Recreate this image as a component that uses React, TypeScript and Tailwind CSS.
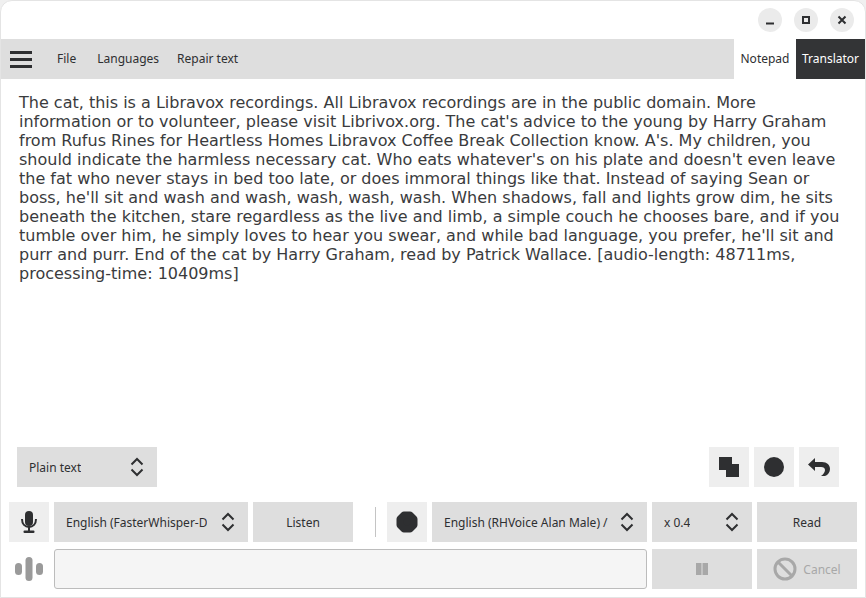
const Chevrons = () => (
  <svg width="14" height="22" viewBox="0 0 14 22" fill="none" stroke="#2e2f31" strokeWidth="2" className="shrink-0">
    <path d="M1.500 8.500 7 3l5.500 5.500M1.500 13.500 7 19l5.500-5.500" />
  </svg>
);

const Select = ({ label, className }: { label: string; className: string }) => (
  <div className={`h-10 shrink-0 bg-[#dedede] flex items-center justify-between pl-3 pr-[13px] text-[12px] text-[#2e2f31] ${className}`}>
    <span className="truncate pt-px">{label}</span>
    <Chevrons />
  </div>
);

const IconBox = ({ children }: { children: React.ReactNode }) => (
  <div className="w-10 h-10 bg-[#eeeeee] flex items-center justify-center shrink-0">{children}</div>
);

const WinButton = ({ children }: { children: React.ReactNode }) => (
  <div className="w-6 h-6 rounded-full bg-[#ebebeb] flex items-center justify-center">
    <svg width="10" height="10" viewBox="0 0 10 10" fill="none" stroke="#2e2f31" strokeWidth="2">{children}</svg>
  </div>
);

const text = "The cat, this is a Libravox recordings. All Libravox recordings are in the public domain. More information or to volunteer, please visit Librivox.org. The cat's advice to the young by Harry Graham from Rufus Rines for Heartless Homes Libravox Coffee Break Collection know. A's. My children, you should indicate the harmless necessary cat. Who eats whatever's on his plate and doesn't even leave the fat who never stays in bed too late, or does immoral things like that. Instead of saying Sean or boss, he'll sit and wash and wash, wash, wash, wash. When shadows, fall and lights grow dim, he sits beneath the kitchen, stare regardless as the live and limb, a simple couch he chooses bare, and if you tumble over him, he simply loves to hear you swear, and while bad language, you prefer, he'll sit and purr and purr. End of the cat by Harry Graham, read by Patrick Wallace. [audio-length: 48711ms, processing-time: 10409ms]";

export default function App() {
  return (
    <div className="w-[866px] h-[598px] bg-[#f0f0f0] font-['Noto_Sans',sans-serif] text-[#2e2f31]">
      <div className="w-full h-full bg-white flex flex-col overflow-hidden rounded-t-[12px] border border-[#e4e4e4]">
        <div className="h-[38px] flex items-center justify-end gap-3 pr-[11px] shrink-0">
          <WinButton><path d="M1 8.500h8" /></WinButton>
          <WinButton><path d="M2 2h6v6H2z" /></WinButton>
          <WinButton><path d="m1.500 1.500 7 7M8.500 1.500l-7 7" /></WinButton>
        </div>
        <div className="h-10 bg-[#dedede] flex items-center shrink-0 text-[12px]">
          <div className="w-[42px] pl-[9px] flex flex-col gap-1 shrink-0">
            <div className="w-[22px] h-[3px] bg-[#2e2f31]" />
            <div className="w-[22px] h-[3px] bg-[#2e2f31]" />
            <div className="w-[22px] h-[3px] bg-[#2e2f31]" />
          </div>
          <span className="ml-[14px]">File</span>
          <span className="ml-[21px]">Languages</span>
          <span className="ml-[18px]">Repair text</span>
          <div className="ml-auto flex h-full">
            <div className="w-[62px] bg-white flex items-center justify-center">Notepad</div>
            <div className="w-[69px] bg-[#333436] text-white flex items-center justify-center">Translator</div>
          </div>
        </div>
        <div className="flex-1 pl-[18px] pr-[18px] pt-[14px] font-['DejaVu_Sans',sans-serif] text-[16px] leading-[19px] text-[#3a3b3d]">{text}</div>
        <div className="flex items-center justify-between pl-4 pr-[26px] shrink-0">
          <Select label="Plain text" className="w-[140px]" />
          <div className="flex gap-[5px]">
            <IconBox>
              <svg width="20" height="20" viewBox="0 0 20 20" fill="#2e2f31">
                <rect x="0" y="0" width="13" height="13" />
                <rect x="7" y="7" width="13" height="13" />
              </svg>
            </IconBox>
            <IconBox><div className="w-5 h-5 rounded-full bg-[#2e2f31]" /></IconBox>
            <IconBox>
              <svg width="22" height="18" viewBox="0 0 22 18">
                <path d="M0 6.500 7 0v4h7c5 0 8 3 8 7 0 3-2 6-5 7h-4c3-2 4-4.500 4-6 0-2-1.500-3-4-3H7v4z" fill="#2e2f31" />
              </svg>
            </IconBox>
          </div>
        </div>
        <div className="flex items-center pl-2 mt-[15px] gap-[5px] shrink-0">
          <IconBox>
            <svg width="16" height="22" viewBox="0 0 16 22" fill="#2e2f31">
              <rect x="4" y="0" width="8" height="15" rx="4" />
              <path d="M1 8c0 5 3 8 7 8s7-3 7-8" fill="none" stroke="#2e2f31" strokeWidth="2" />
              <rect x="7" y="15" width="2" height="5" />
              <rect x="2.500" y="19.500" width="11" height="2.500" rx="1" />
            </svg>
          </IconBox>
          <Select label="English (FasterWhisper-D" className="w-[194px]" />
          <div className="w-[100px] h-10 shrink-0 bg-[#dedede] flex items-center justify-center text-[12px] pt-px">Listen</div>
          <div className="w-px h-[30px] bg-[#c4c4c4] ml-[17px] mr-[6px] shrink-0" />
          <IconBox>
            <svg width="22" height="22" viewBox="0 0 22 22" fill="#2e2f31">
              <path d="M8 4h6l4 4v6l-4 4H8l-4-4V8z" stroke="#2e2f31" strokeWidth="7" strokeLinejoin="round" />
            </svg>
          </IconBox>
          <Select label="English (RHVoice Alan Male) /" className="w-[215px]" />
          <Select label="x 0.4" className="w-[100px]" />
          <div className="w-[100px] h-10 shrink-0 bg-[#dedede] flex items-center justify-center text-[12px] pt-px">Read</div>
        </div>
        <div className="flex items-center pl-2 mt-[7px] mb-2 gap-[5px] shrink-0">
          <div className="w-10 h-10 flex items-center justify-center shrink-0">
            <svg width="28" height="24" viewBox="0 0 28 24" fill="#9a9a9a">
              <rect x="0" y="6" width="7" height="12" rx="3.500" />
              <rect x="10.500" y="0" width="7" height="24" rx="3.500" />
              <rect x="21" y="6" width="7" height="12" rx="3.500" />
            </svg>
          </div>
          <div className="w-[593px] h-10 shrink-0 bg-[#f5f5f5] border border-[#bcbcbc] rounded-[3px]" />
          <div className="w-[100px] h-10 shrink-0 bg-[#dedede] flex items-center justify-center">
            <svg width="12" height="12" viewBox="0 0 12 12" fill="#a8a8a8"><rect x="0" y="0" width="5.500" height="12" /><rect x="6.500" y="0" width="5.500" height="12" /></svg>
          </div>
          <div className="w-[100px] h-10 shrink-0 bg-[#dedede] flex items-center justify-center gap-[6px] text-[12px] text-[#a8a8a8]">
            <svg width="24" height="24" viewBox="0 0 24 24" fill="none" stroke="#a8a8a8" strokeWidth="3">
              <circle cx="12" cy="12" r="10" />
              <path d="m5 5 14 14" />
            </svg>
            <span className="pt-px">Cancel</span>
          </div>
        </div>
      </div>
    </div>
  );
}
